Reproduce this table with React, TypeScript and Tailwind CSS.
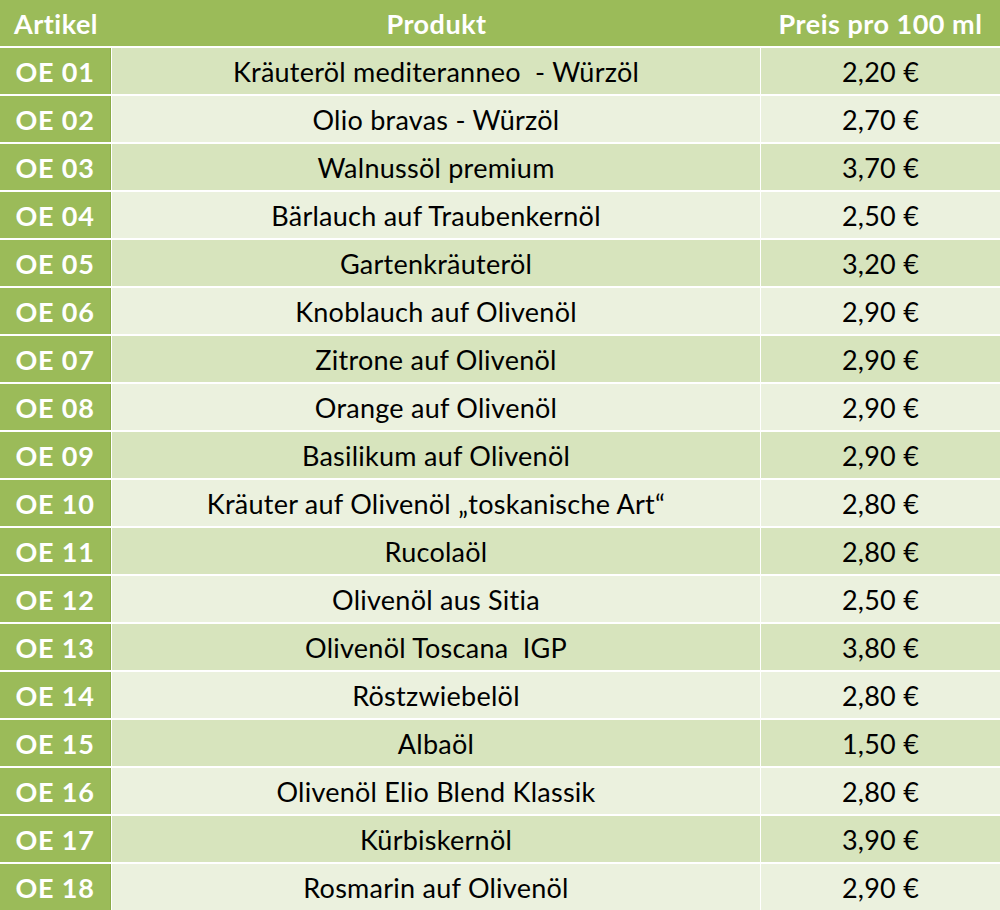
import React from "react";

const rows: [string, string, string][] = [
  ["OE 01", "Kräuteröl mediteranneo  - Würzöl", "2,20 €"],
  ["OE 02", "Olio bravas - Würzöl", "2,70 €"],
  ["OE 03", "Walnussöl premium", "3,70 €"],
  ["OE 04", "Bärlauch auf Traubenkernöl", "2,50 €"],
  ["OE 05", "Gartenkräuteröl", "3,20 €"],
  ["OE 06", "Knoblauch auf Olivenöl", "2,90 €"],
  ["OE 07", "Zitrone auf Olivenöl", "2,90 €"],
  ["OE 08", "Orange auf Olivenöl", "2,90 €"],
  ["OE 09", "Basilikum auf Olivenöl", "2,90 €"],
  ["OE 10", "Kräuter auf Olivenöl „toskanische Art“", "2,80 €"],
  ["OE 11", "Rucolaöl", "2,80 €"],
  ["OE 12", "Olivenöl aus Sitia", "2,50 €"],
  ["OE 13", "Olivenöl Toscana  IGP", "3,80 €"],
  ["OE 14", "Röstzwiebelöl", "2,80 €"],
  ["OE 15", "Albaöl", "1,50 €"],
  ["OE 16", "Olivenöl Elio Blend Klassik", "2,80 €"],
  ["OE 17", "Kürbiskernöl", "3,90 €"],
  ["OE 18", "Rosmarin auf Olivenöl", "2,90 €"],
];

export default function App() {
  return (
    <div
      className="w-[1000px] h-[910px] bg-white overflow-hidden"
      style={{ fontFamily: "Lato, 'Open Sans', sans-serif" }}
    >
      <div className="flex h-[46px] bg-[#9BBB59] text-white font-bold text-[27px] tracking-[0.5px] leading-none">
        <div className="w-[112px] flex items-center justify-center">Artikel</div>
        <div className="w-[649px] flex items-center justify-center">Produkt</div>
        <div className="w-[239px] flex items-center justify-center">Preis pro 100 ml</div>
      </div>
      {rows.map(([id, name, price], i) => {
        const bg = i % 2 === 0 ? "bg-[#D7E4BD]" : "bg-[#EBF1DE]";
        return (
          <div key={id} className="flex mt-[2px] h-[46px] gap-px text-[27px] leading-none">
            <div className="w-[111px] bg-[#9BBB59] border-r border-[#8AAB48] flex items-center justify-center text-white font-bold tracking-[0.8px]">
              {id}
            </div>
            <div className={`w-[648px] ${bg} flex items-center justify-center text-black whitespace-pre tracking-[0.25px]`}>
              {name}
            </div>
            <div className={`w-[239px] ${bg} flex items-center justify-center text-black tracking-[0.25px]`}>
              {price}
            </div>
          </div>
        );
      })}
    </div>
  );
}
